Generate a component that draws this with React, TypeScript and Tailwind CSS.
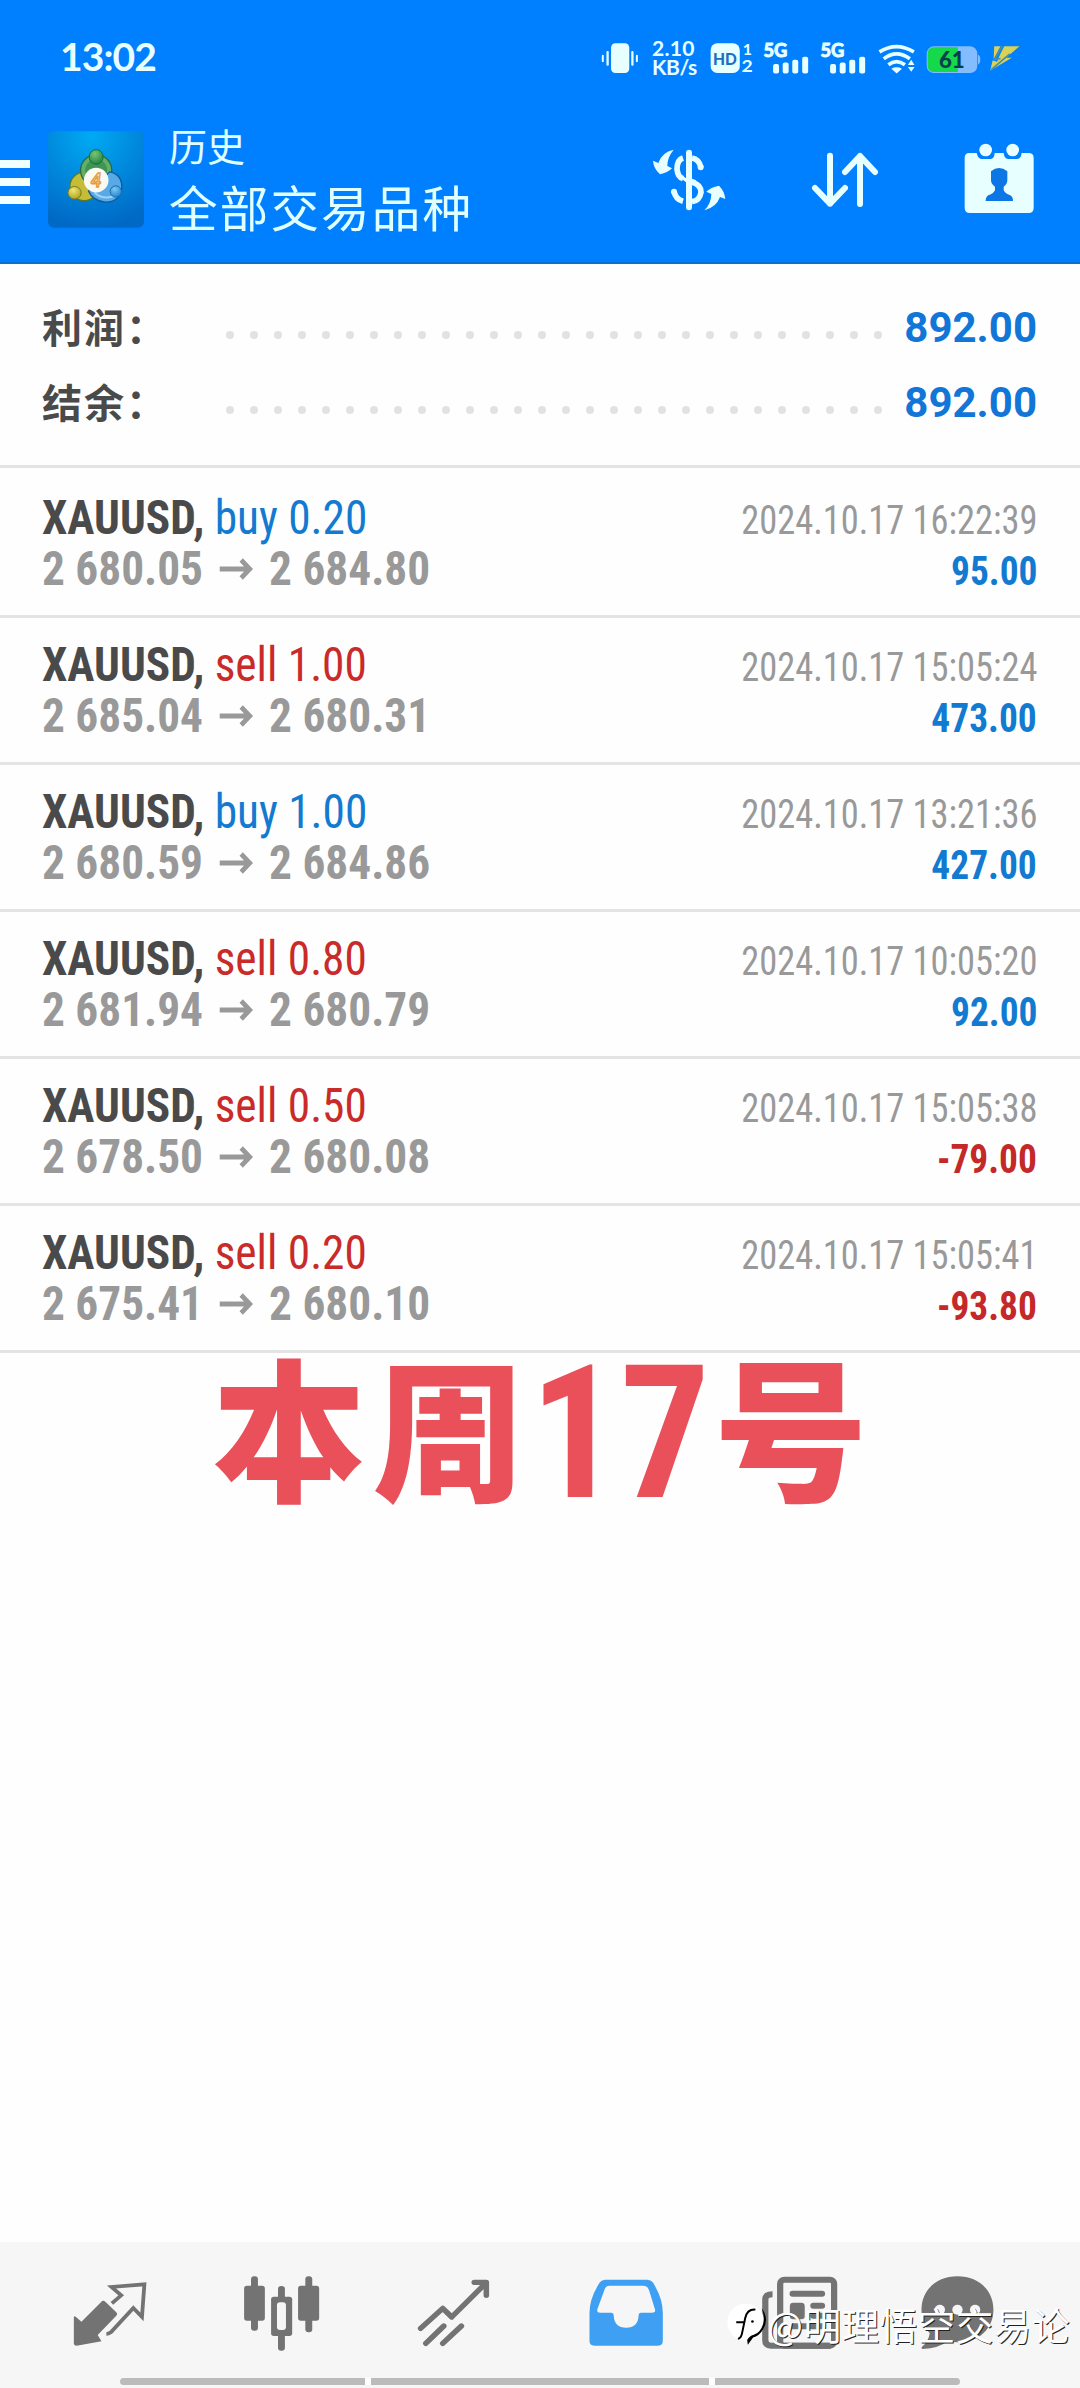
import { ReactNode } from "react";

type Trade = {
  type: "buy" | "sell";
  volume: string;
  open: string;
  close: string;
  time: string;
  profit: string;
};

const trades: Trade[] = [
  { type: "buy", volume: "0.20", open: "2 680.05", close: "2 684.80", time: "2024.10.17 16:22:39", profit: "95.00" },
  { type: "sell", volume: "1.00", open: "2 685.04", close: "2 680.31", time: "2024.10.17 15:05:24", profit: "473.00" },
  { type: "buy", volume: "1.00", open: "2 680.59", close: "2 684.86", time: "2024.10.17 13:21:36", profit: "427.00" },
  { type: "sell", volume: "0.80", open: "2 681.94", close: "2 680.79", time: "2024.10.17 10:05:20", profit: "92.00" },
  { type: "sell", volume: "0.50", open: "2 678.50", close: "2 680.08", time: "2024.10.17 15:05:38", profit: "-79.00" },
  { type: "sell", volume: "0.20", open: "2 675.41", close: "2 680.10", time: "2024.10.17 15:05:41", profit: "-93.80" },
];

function Signal() {
  return (
    <svg viewBox="552 50 138 130" className="h-[43px] w-[46px]" fill="#e8ffff">
      <text x="553" y="114" fontSize="56" fontWeight="700" stroke="#e8ffff" strokeWidth="3" textLength="72" lengthAdjust="spacingAndGlyphs">
        5G
      </text>
      <rect x="582" y="135" width="18" height="28" rx="6" />
      <rect x="611" y="130" width="18" height="33" rx="6" />
      <rect x="640" y="122" width="18" height="41" rx="6" />
      <rect x="670" y="113" width="18" height="50" rx="6" />
    </svg>
  );
}

function StatusBar() {
  return (
    <div className="flex h-[115px] items-center justify-between pl-[60px] pr-[60px] font-['Lato','Noto_Sans',sans-serif] text-[#e8ffff]">
      <span className="pb-[2px] text-[39px] font-bold leading-none tracking-[-0.9px]">13:02</span>
      <div className="flex items-center">
        <svg viewBox="66 50 114 130" className="h-[43px] w-[38px]" fill="#e8ffff">
          <rect x="96" y="72" width="55" height="90" rx="13" />
          <rect x="68" y="107" width="6" height="22" rx="3" />
          <rect x="82" y="95" width="7" height="45" rx="3" />
          <rect x="157" y="95" width="7" height="45" rx="3" />
          <rect x="171" y="107" width="6" height="22" rx="3" />
        </svg>
        <div className="ml-[13px] flex w-[45px] flex-col pb-[2px] text-[21px] font-bold leading-[19px]">
          <span className="tracking-[0.3px]">2.10</span>
          <span className="tracking-[-0.4px]">KB/s</span>
        </div>
        <svg viewBox="392 50 130 130" className="ml-[13px] h-[43px] w-[43px]" fill="#e8ffff">
          <rect x="394" y="72" width="88" height="90" rx="20" />
          <text x="401" y="137" fontSize="54" fontWeight="900" fill="#1b6fc4" textLength="72" lengthAdjust="spacingAndGlyphs">
            HD
          </text>
          <text x="491" y="107" fontSize="48" fontWeight="700">
            1
          </text>
          <text x="487" y="159" fontSize="52" fontWeight="700" textLength="34" lengthAdjust="spacingAndGlyphs">
            2
          </text>
        </svg>
        <div className="ml-[10px]">
          <Signal />
        </div>
        <div className="ml-[11px]">
          <Signal />
        </div>
        <svg viewBox="896 50 114 130" className="ml-[12px] h-[43px] w-[38px]" fill="none" stroke="#e8ffff" strokeWidth="11">
          <path d="M900 98Q951 66 1004 98" />
          <path d="M913 119Q951 89 992 119" />
          <path d="M927 137Q951 118 977 137" />
          <path d="M936 149Q952 140 968 149L952 163Z" fill="#e8ffff" stroke="none" />
          <path d="M986 138L996 122L1006 138ZM986 144L996 158L1006 144Z" fill="#e8ffff" stroke="none" />
        </svg>
        <svg viewBox="1040 50 164 130" className="ml-[10px] h-[43px] w-[55px]">
          <rect x="1041" y="81" width="153" height="81" rx="22" fill="#84bdff" />
          <path d="M1196 107Q1203 109 1203 121Q1203 133 1196 136Z" fill="#84bdff" />
          <path d="M1135 84H1064Q1044 84 1044 104V139Q1044 159 1064 159H1135Z" fill="#15d84a" />
          <text x="1078" y="148" fontSize="71" fontWeight="900" fill="#04404a" textLength="78" lengthAdjust="spacingAndGlyphs">
            61
          </text>
        </svg>
        <svg viewBox="1228 50 92 130" className="ml-[8px] h-[43px] w-[31px]" fill="#d8d257">
          <path d="M1243 81H1262L1241 120Z" />
          <path d="M1273 81H1319L1279 116H1296L1231 154L1238 124L1252 128L1256 116Z" />
          <path d="M1267 81L1246 118M1290 104L1234 152M1240 122L1262 118" stroke="#4b8f9e" strokeWidth="5" />
        </svg>
      </div>
    </div>
  );
}

function Logo() {
  return (
    <svg viewBox="54 48 289 290" className="ml-[18px] h-[97px] w-[96px]">
      <defs>
        <radialGradient id="tile" cx="0.45" cy="0.05" r="0.95">
          <stop offset="0" stopColor="#00aaf4" />
          <stop offset="0.5" stopColor="#0089dc" />
          <stop offset="1" stopColor="#0069c6" />
        </radialGradient>
        <radialGradient id="green" cx="0.4" cy="0.3" r="0.8">
          <stop offset="0" stopColor="#74c678" />
          <stop offset="1" stopColor="#1b7d3b" />
        </radialGradient>
        <radialGradient id="yellow" cx="0.4" cy="0.3" r="0.8">
          <stop offset="0" stopColor="#f0e773" />
          <stop offset="1" stopColor="#a79a1b" />
        </radialGradient>
        <radialGradient id="blue" cx="0.4" cy="0.3" r="0.8">
          <stop offset="0" stopColor="#7cc8f5" />
          <stop offset="1" stopColor="#1a7fcb" />
        </radialGradient>
      </defs>
      <rect x="54" y="48" width="289" height="290" rx="18" fill="url(#tile)" />
      <circle cx="163" cy="214" r="43" fill="#c5bd38" stroke="#557a2a" strokeWidth="4" />
      <circle cx="199" cy="165" r="47" fill="#63ae68" stroke="#1f6f46" strokeWidth="4" />
      <circle cx="199" cy="165" r="33" fill="#3f9556" />
      <path d="M240 170Q279 178 276 222Q268 262 226 261Q188 257 176 228Z" fill="#57aae6" stroke="#12599c" strokeWidth="4" />
      <path d="M194 232Q220 258 262 240" fill="none" stroke="#9cd4f7" strokeWidth="6" />
      <ellipse cx="199" cy="125" rx="21" ry="22" fill="url(#green)" stroke="#1b6b3b" strokeWidth="3" />
      <ellipse cx="134" cy="233" rx="20" ry="19" fill="url(#yellow)" stroke="#77771c" strokeWidth="3" />
      <circle cx="258" cy="229" r="17" fill="url(#blue)" stroke="#1a6bb0" strokeWidth="3" />
      <circle cx="199" cy="195" r="37" fill="#fbfaf2" />
      <text x="199" y="215" textAnchor="middle" fontSize="56" fontWeight="700" fontStyle="italic" fill="#fbe9c8" stroke="#e79a45" strokeWidth="4" className="font-['Lato',sans-serif]">
        4
      </text>
    </svg>
  );
}

function Header() {
  return (
    <header className="h-[264px] border-b-2 border-[#0a6fd0] bg-[#007fff]">
      <StatusBar />
      <div className="flex h-[129px] items-center pr-[41px]">
        <div className="flex w-[30px] flex-col gap-[10px] pt-1">
          <span className="h-2 bg-[#f2ffff]" />
          <span className="h-2 bg-[#f2ffff]" />
          <span className="h-2 bg-[#f2ffff]" />
        </div>
        <Logo />
        <div className="ml-[25px] flex flex-1 flex-col pb-1 font-['Noto_Sans_CJK_SC',sans-serif] text-[#e0ffff]">
          <span className="text-[38px] leading-[54px]">历史</span>
          <span className="mt-[3px] text-[48.5px] leading-[62px] tracking-[2.2px]">全部交易品种</span>
        </div>
        <svg viewBox="150 90 240 240" className="h-20 w-20" fill="#e8ffff">
          <rect x="261" y="119" width="18" height="182" rx="9" />
          <path d="M252 144Q234 150 234 177Q236 201 252 206M279 144Q300 148 306 172M279 217Q306 224 306 247Q302 272 279 275M252 274Q230 268 225 244" fill="none" stroke="#e8ffff" strokeWidth="17" />
          <circle cx="305" cy="172" r="9" />
          <circle cx="225" cy="245" r="9" />
          <path d="M279 206L292 211L279 226ZM252 198L261 205V217L246 205Z" />
          <path d="M224 119Q205 142 205 168L219 175Q206 188 183 193Q164 176 162 152L178 159Q188 127 224 119Z" />
          <path d="M316 301Q336 282 337 252L322 245Q335 232 360 227Q377 244 379 267L363 261Q352 292 316 301Z" />
        </svg>
        <svg viewBox="618 90 240 240" className="ml-[76px] h-20 w-20" fill="none" stroke="#e8ffff" strokeWidth="18" strokeLinecap="round" strokeLinejoin="round">
          <path d="M693 137V281M648 234L693 281L738 234" />
          <path d="M783 282V138M738 186L783 138L828 186" />
        </svg>
        <svg viewBox="1081 90 240 240" className="ml-[74px] h-20 w-20" fill="#e8ffff">
          <path d="M1112 129H1134Q1138 147 1150 147H1174Q1187 147 1188 129H1215Q1217 147 1230 147H1254Q1267 147 1269 129H1290Q1305 129 1305 144V293Q1305 309 1290 309H1114Q1098 309 1098 293V144Q1098 129 1112 129Z" />
          <circle cx="1161" cy="120" r="19" />
          <circle cx="1242" cy="120" r="19" />
          <path d="M1177 184Q1201 164 1226 184V210Q1226 222 1215 230V240Q1218 250 1235 256Q1243 261 1243 273H1161Q1161 261 1169 256Q1186 250 1189 240V230Q1177 222 1177 210Z" fill="#0b76e4" />
        </svg>
      </div>
    </header>
  );
}

function SummaryRow({ label, value }: { label: string; value: string }) {
  return (
    <div className="flex h-[75px] items-center justify-between pl-[42px] pr-[43px]">
      <span className="w-[184px] pb-1 font-['Noto_Sans_CJK_SC',sans-serif] text-[40px] font-bold tracking-[2px] text-[#4a4a4a]">
        {label}
      </span>
      <div className="flex gap-4 pt-[14px]">
        {Array.from({ length: 28 }, (_, i) => (
          <span key={i} className="size-2 rounded-full bg-[#e2e2e2]" />
        ))}
      </div>
      <span className="w-[155px] text-right text-[42px] font-bold text-[#1276d8]">{value}</span>
    </div>
  );
}

function TradeRow({ trade }: { trade: Trade }) {
  return (
    <div className="flex h-[147px] justify-between border-b-3 border-[#e4e4e4] pl-[42px] pr-[43px] font-['Roboto_Condensed','Roboto',sans-serif] font-stretch-condensed">
      <div className="flex origin-left scale-x-[0.944] flex-col pt-[21px] text-[48px] leading-[51px]">
        <div className="whitespace-nowrap">
          <span className="font-bold text-[#4a4a4a]">XAUUSD, </span>
          <span className={trade.type === "buy" ? "text-[#127ad0]" : "text-[#c92a2a]"}>
            {trade.type} {trade.volume}
          </span>
        </div>
        <div className="flex items-center font-bold text-[#999]">
          <span>{trade.open}</span>
          <svg viewBox="0 0 36 22" className="mx-[17px] h-[22px] w-9" fill="none" stroke="#999" strokeWidth="5">
            <path d="M0 11H32M23 2L32 11L23 20" />
          </svg>
          <span>{trade.close}</span>
        </div>
      </div>
      <div className="flex flex-col items-end pt-[24px] text-[40px] leading-[51px]">
        <span className="origin-right scale-x-[0.91] text-[#999]">{trade.time}</span>
        <span
          className={`origin-right scale-x-[0.935] font-bold ${
            trade.profit.startsWith("-") ? "text-[#c42828]" : "text-[#127ad0]"
          }`}
        >
          {trade.profit}
        </span>
      </div>
    </div>
  );
}

function Tab({ viewBox, children }: { viewBox: string; children: ReactNode }) {
  return (
    <button className="flex w-[172px] justify-center">
      <svg viewBox={viewBox} preserveAspectRatio="none" className="h-20 w-[83px]" fill="#737373">
        {children}
      </svg>
    </button>
  );
}

function BottomNav() {
  return (
    <nav className="relative flex h-[146px] flex-col justify-between bg-[#f6f6f6] pb-[3px] pt-[31px]">
      <div className="flex pl-6">
        <Tab viewBox="201 130 240 240">
          <path d="M215 262Q217 258 221 262L237 276L294 217Q300 210 306 216L337 247Q343 253 337 259L284 316L295 335L223 348Q215 348 215 340Z" />
          <path d="M325 221L352 197L324 172L419 164L412 262L387 235L322 308Q315 313 309 313" fill="none" stroke="#737373" strokeWidth="11" />
        </Tab>
        <Tab viewBox="700 130 240 240">
          <rect x="729" y="140" width="20" height="163" rx="9" />
          <rect x="709" y="168" width="60" height="105" rx="8" />
          <rect x="886" y="140" width="20" height="168" rx="9" />
          <rect x="865" y="168" width="61" height="105" rx="8" />
          <rect x="807" y="169" width="20" height="194" rx="9" />
          <rect x="787" y="201" width="61" height="118" rx="8" />
          <rect x="804" y="218" width="26" height="83" rx="9" fill="#f6f6f6" />
        </Tab>
        <Tab viewBox="1199 130 240 240">
          <path d="M1221 296L1285 236L1311 262L1408 162M1376 158H1411V197M1236 341L1288 289M1285 341L1339 289" fill="none" stroke="#737373" strokeWidth="16" strokeLinecap="round" strokeLinejoin="round" />
        </Tab>
        <Tab viewBox="132 130 240 240">
          <path
            d="M190 150H312Q322 150 328 158Q357 205 357 250V334Q357 348 343 348H159Q145 348 145 334V250Q145 205 175 158Q181 150 190 150ZM202 168Q194 168 190 176L168 238Q165 249 176 249H208Q215 249 215 258Q217 294 251 294Q285 294 287 258Q287 249 294 249H326Q338 249 334 238L317 181Q313 168 300 168Z"
            fill="#3f9ff2"
            fillRule="evenodd"
          />
        </Tab>
        <Tab viewBox="632 130 240 240">
          <rect x="699" y="150" width="156" height="198" rx="12" fill="none" stroke="#737373" strokeWidth="18" />
          <path d="M677 194Q656 194 656 210V332Q656 348 672 348H846" fill="none" stroke="#737373" strokeWidth="18" />
          <path d="M735 192H820M795 228H820M795 258H820M735 290H820" stroke="#737373" strokeWidth="18" strokeLinecap="round" />
          <rect x="727" y="219" width="43" height="50" rx="10" />
        </Tab>
        <button className="flex w-[148px] justify-center">
          <svg viewBox="1097 130 240 240" preserveAspectRatio="none" className="h-20 w-[83px]" fill="#737373">
            <path d="M1214 140C1275 140 1318 182 1318 240C1318 298 1275 338 1214 338Q1200 338 1186 335Q1160 356 1114 358Q1106 357 1113 350Q1130 336 1134 311C1118 291 1110 268 1110 240C1110 182 1153 140 1214 140Z" />
            <circle cx="1163" cy="240" r="15" fill="#f6f6f6" />
            <circle cx="1214" cy="240" r="15" fill="#f6f6f6" />
            <circle cx="1265" cy="240" r="15" fill="#f6f6f6" />
          </svg>
        </button>
      </div>
      <div className="ml-[120px] flex h-[7px] w-[840px] gap-[6px] overflow-hidden rounded-full bg-white">
        <span className="w-[245px] bg-[#bbb]" />
        <span className="w-[338px] bg-[#bbb]" />
        <span className="w-[245px] bg-[#bbb]" />
      </div>
      {/* author signature floating over the tabs */}
      <div className="absolute right-[10px] top-[59px] flex items-center">
        <svg viewBox="8 88 124 130" className="h-[43px] w-[41px]">
          <circle cx="68" cy="146" r="56" fill="#fff" />
          <path d="M44 196Q52 196 56 182L66 134Q72 106 97 108M39 146H66" fill="none" stroke="#000" strokeWidth="6" />
          <path d="M116 104Q140 136 120 168Q108 188 90 192L74 214L72 200Q78 188 92 184Q112 178 120 152Q126 128 116 104Z" />
          <circle cx="88" cy="144" r="4" />
        </svg>
        <span className="whitespace-nowrap font-['Noto_Sans_CJK_SC',sans-serif] text-[37.7px] leading-[46px] tracking-[0.4px] text-white [text-shadow:1px_1px_0_#222]">
          @明理悟空交易论
        </span>
      </div>
    </nav>
  );
}

export default function App() {
  return (
    <div className="flex h-[2388px] w-[1080px] flex-col overflow-hidden bg-[#fefefe] font-['Roboto',sans-serif]">
      <Header />
      <section className="h-[204px] border-b-3 border-[#e4e4e4] pt-[26px]">
        <SummaryRow label="利润：" value="892.00" />
        <SummaryRow label="结余：" value="892.00" />
      </section>
      <main className="flex-1 pt-[3px]">
        {trades.map((trade) => (
          <TradeRow key={trade.profit} trade={trade} />
        ))}
        <p className="flex h-[154px] items-baseline justify-center whitespace-nowrap text-center font-['Noto_Sans_CJK_SC',sans-serif] text-[153px] font-black leading-[142px] text-[#e9505a]">
          <span className="w-40">本</span>
          <span className="w-40">周</span>
          <span className="flex w-[182px] translate-y-[7px] scale-x-[0.96] justify-center font-['Roboto',sans-serif] text-[186px] font-bold font-stretch-condensed">
            17
          </span>
          <span className="w-40">号</span>
        </p>
      </main>
      <BottomNav />
    </div>
  );
}
